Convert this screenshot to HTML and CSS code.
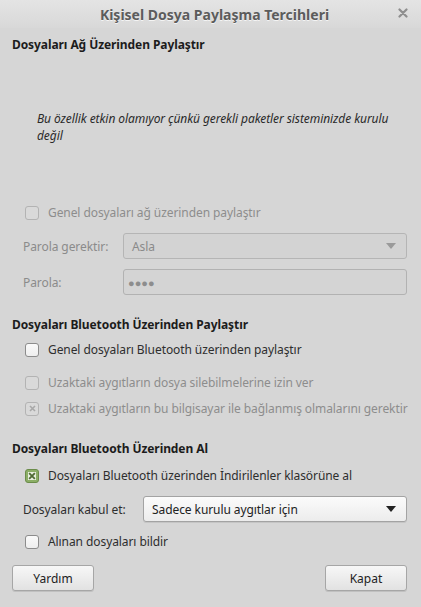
FILE: index.html
```html
<!DOCTYPE html>
<html lang="tr">
<head>
<meta charset="utf-8">
<title>Kişisel Dosya Paylaşma Tercihleri</title>
<link rel="stylesheet" href="styles.css">
</head>
<body>
<div class="window">
  <header class="titlebar">
    <span class="title">Kişisel Dosya Paylaşma Tercihleri</span>
    <span class="close">
      <svg width="10" height="10" viewBox="0 0 10 10"><path d="M1.5 1.5 L8.5 8.5 M8.5 1.5 L1.5 8.5" stroke="#8e8e8e" stroke-width="2.2" stroke-linecap="round"/></svg>
    </span>
  </header>

  <main class="content">
    <section class="group">
      <h2 class="heading">Dosyaları Ağ Üzerinden Paylaştır</h2>
      <p class="notice">Bu özellik etkin olamıyor çünkü gerekli paketler sisteminizde kurulu değil</p>

      <label class="check disabled net-share">
        <span class="box"></span>
        <span>Genel dosyaları ağ üzerinden paylaştır</span>
      </label>

      <div class="field disabled need-pass">
        <span class="field-label">Parola gerektir:</span>
        <div class="combo combo-off">
          <span>Asla</span>
          <svg class="arrow" width="10" height="6" viewBox="0 0 10 6"><path d="M0 0 H10 L5 6 Z" fill="#9a9a9a"/></svg>
        </div>
      </div>

      <div class="field disabled">
        <span class="field-label">Parola:</span>
        <div class="entry">●●●●</div>
      </div>
    </section>

    <section class="group bt-share">
      <h2 class="heading">Dosyaları Bluetooth Üzerinden Paylaştır</h2>
      <label class="check">
        <span class="box"></span>
        <span>Genel dosyaları Bluetooth üzerinden paylaştır</span>
      </label>
      <label class="check disabled">
        <span class="box"></span>
        <span>Uzaktaki aygıtların dosya silebilmelerine izin ver</span>
      </label>
      <label class="check disabled">
        <span class="box marked">
          <svg width="7" height="7" viewBox="0 0 7 7"><path d="M1 1 L6 6 M6 1 L1 6" stroke="#a8a8a8" stroke-width="1.6"/></svg>
        </span>
        <span>Uzaktaki aygıtların bu bilgisayar ile bağlanmış olmalarını gerektir</span>
      </label>
    </section>

    <section class="group bt-receive">
      <h2 class="heading">Dosyaları Bluetooth Üzerinden Al</h2>
      <label class="check">
        <span class="box checked">
          <svg width="7" height="7" viewBox="0 0 7 7"><path d="M1 1 L6 6 M6 1 L1 6" stroke="#4f6b35" stroke-width="1.6"/></svg>
        </span>
        <span>Dosyaları Bluetooth üzerinden İndirilenler klasörüne al</span>
      </label>
      <div class="field accept">
        <span class="field-label">Dosyaları kabul et:</span>
        <div class="combo">
          <span>Sadece kurulu aygıtlar için</span>
          <svg class="arrow" width="10" height="6" viewBox="0 0 10 6"><path d="M0 0 H10 L5 6 Z" fill="#222"/></svg>
        </div>
      </div>
      <label class="check">
        <span class="box"></span>
        <span>Alınan dosyaları bildir</span>
      </label>
    </section>

    <footer class="actions">
      <button class="btn">Yardım</button>
      <button class="btn">Kapat</button>
    </footer>
  </main>
</div>
</body>
</html>
```
FILE: styles.css
```css
html, body {
  margin: 0;
  padding: 0;
}

body {
  width: 421px;
  height: 607px;
  background: #d6d6d6;
  font-family: "Noto Sans", "Open Sans", sans-serif;
  font-size: 12px;
  letter-spacing: -0.08px;
  color: #2e2e2e;
  overflow: hidden;
}

.window {
  display: flex;
  flex-direction: column;
  height: 607px;
}

.titlebar {
  height: 28px;
  flex: none;
  display: flex;
  align-items: center;
  justify-content: center;
  position: relative;
  background: linear-gradient(#e4e4e4, #d8d8d8);
}

.title {
  font-size: 14px;
  font-weight: bold;
  letter-spacing: 0;
  color: #5c5c5c;
  text-shadow: 0 1px 0 #f4f4f4;
  margin-left: 8px;
}

.close {
  position: absolute;
  right: 13px;
  top: 8px;
  display: flex;
}

.content {
  flex: 1;
  display: flex;
  flex-direction: column;
  padding: 0 14px 0 12px;
}

.heading {
  margin: 0;
  font-size: 12px;
  font-weight: bold;
  color: #1c1c1c;
  line-height: 17px;
  white-space: nowrap;
}

.group:first-child .heading {
  margin-top: 8px;
}

.notice {
  margin: 57px 0 0 25px;
  font-style: italic;
  color: #2a2a2a;
  line-height: 17px;
}

.check {
  display: flex;
  align-items: center;
  gap: 9px;
  padding-left: 13px;
  height: 17px;
  line-height: 17px;
  white-space: nowrap;
}

.box {
  width: 12px;
  height: 12px;
  flex: none;
  border: 1px solid #8c8c8c;
  border-radius: 3px;
  background: linear-gradient(#fafafa, #eeeeee);
  display: flex;
  align-items: center;
  justify-content: center;
}

.check.disabled {
  color: #8d8d8d;
}

.check.disabled .box {
  border-color: #b3b3b3;
  background: #d9d9d9;
}

.box.marked {
  background: #dadada;
}

.box.checked {
  border-color: #6b8c4a;
  background: #8bae66;
}

.box.checked svg {
  background: #e9f0df;
  width: 8px;
  height: 8px;
}

.net-share {
  margin-top: 60px;
}

.field {
  display: flex;
  align-items: center;
  margin-top: 11px;
  padding-left: 11px;
}

.need-pass {
  margin-top: 12px;
}

.field.disabled .field-label {
  color: #8b8b8b;
}

.field-label {
  width: 100px;
  flex: none;
}

.combo,
.entry {
  flex: 1;
  height: 24px;
  border: 1px solid #a3a3a3;
  border-radius: 3px;
  display: flex;
  align-items: center;
  padding: 0 10px 0 8px;
  box-sizing: content-box;
}

.combo {
  justify-content: space-between;
  background: linear-gradient(#fbfbfb, #ececec);
  box-shadow: 0 1px 0 rgba(0, 0, 0, 0.08);
}

.combo-off {
  background: #d3d3d3;
  border-color: #b5b5b5;
  color: #8a8a8a;
  box-shadow: none;
}

.entry {
  background: #d4d4d4;
  border-color: #b2b2b2;
  color: #8d8d8d;
  font-size: 11px;
  letter-spacing: 0;
  margin-top: -1px;
  padding-left: 4px;
}

.bt-share {
  margin-top: 21px;
  display: flex;
  flex-direction: column;
}

.bt-share .check {
  margin-top: 8px;
}

.bt-share .check + .check {
  margin-top: 16px;
}

.bt-share .check + .check + .check {
  margin-top: 9px;
}

.bt-receive {
  margin-top: 23px;
  display: flex;
  flex-direction: column;
}

.bt-receive .check:first-of-type {
  margin-top: 10px;
}

.accept {
  margin-top: 12px;
}

.accept .field-label {
  width: 120px;
}

.accept .combo {
  color: #222;
}

.bt-receive .check:last-child {
  margin-top: 11px;
}

.actions {
  display: flex;
  justify-content: space-between;
  margin-top: 15px;
}

.btn {
  width: 82px;
  height: 26px;
  font-family: inherit;
  font-size: 12px;
  color: #222;
  border: 1px solid #a6a6a6;
  border-radius: 3px;
  background: linear-gradient(#f7f7f7, #e2e2e2);
  box-shadow: 0 1px 0 rgba(0, 0, 0, 0.1);
  padding: 0;
}
```
